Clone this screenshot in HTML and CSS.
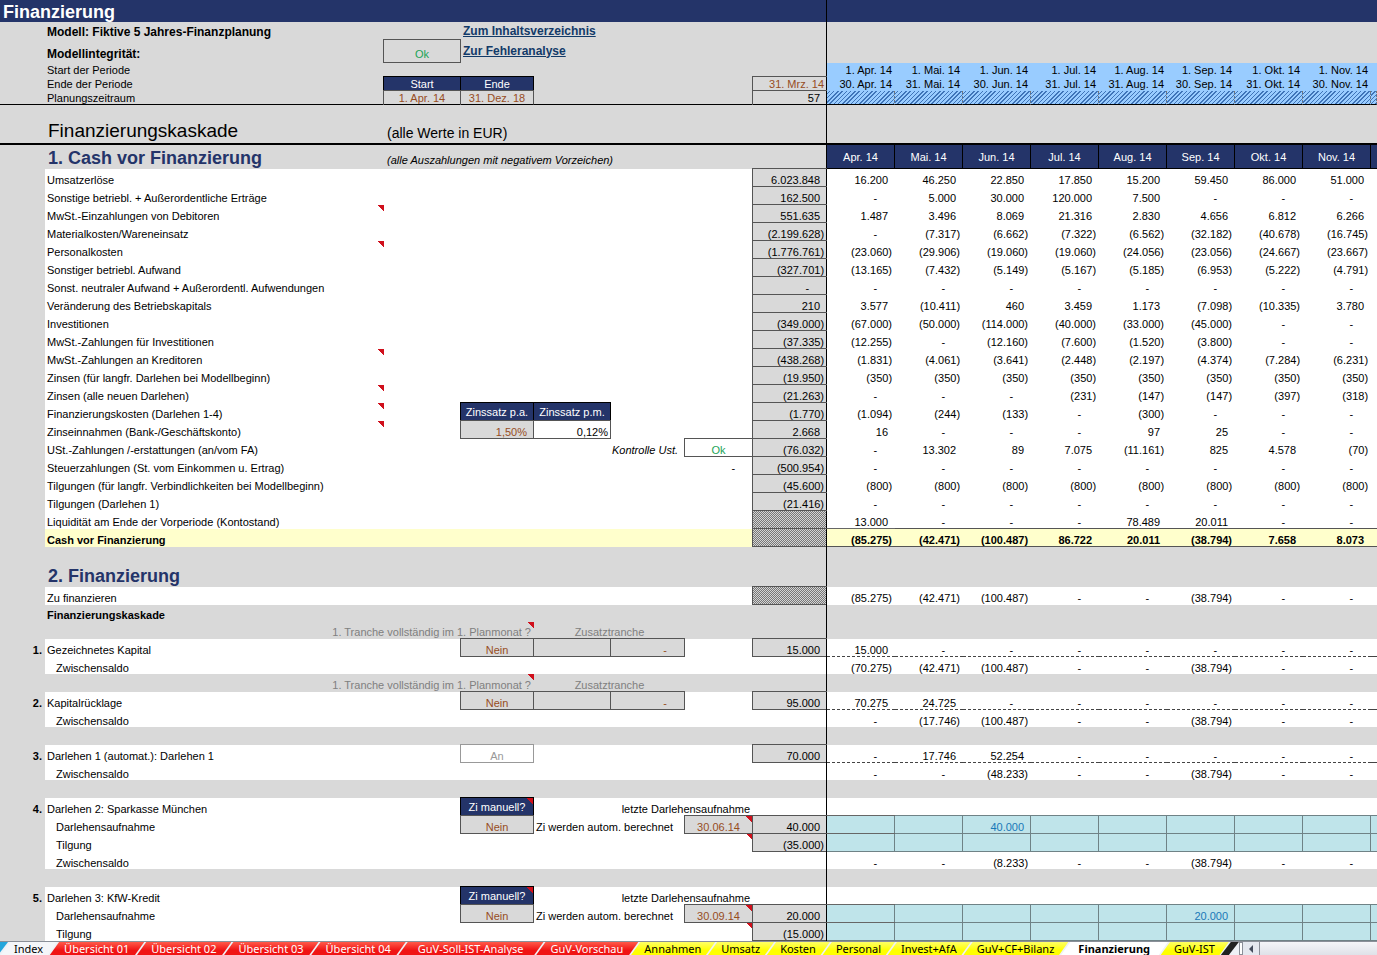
FILE: index.html
```html
<!DOCTYPE html>
<html lang="de">
<head>
  <meta charset="UTF-8" />
  <meta name="viewport" content="width=device-width, initial-scale=1" />
  <title>Finanzierung</title>
  <link rel="stylesheet" href="styles.css">
</head>
<body>
  <main class="sheet">
    <table>
      <colgroup>
        <col class="c-nr"><col class="c-label"><col class="c-77"><col class="c-73"><col class="c-77"><col class="c-74"><col class="c-68"><col class="c-74">
        <col class="c-68" span="8"><col>
      </colgroup>

      <!-- Kopf -->
      <tbody class="kopf">
        <tr class="titel"><td colspan="7"><h1>Finanzierung</h1></td><td class="t"></td><td colspan="9"></td></tr>
        <tr class="modell"><td></td><th colspan="2">Modell: Fiktive 5 Jahres-Finanzplanung</th><td colspan="4"><a href="#inhalt">Zum Inhaltsverzeichnis</a></td><td class="t"></td><td colspan="9"></td></tr>
        <tr class="integritaet"><td></td><th>Modellintegrität:</th><td class="box mid ok">Ok</td><td class="link" colspan="4"><a href="#fehler">Zur Fehleranalyse</a></td><td class="t"></td><td colspan="9"></td></tr>
        <tr class="periode"><td></td><th>Start der Periode</th><td colspan="5"></td><td class="t"></td><td>1. Apr. 14</td><td>1. Mai. 14</td><td>1. Jun. 14</td><td>1. Jul. 14</td><td>1. Aug. 14</td><td>1. Sep. 14</td><td>1. Okt. 14</td><td>1. Nov. 14</td><td></td></tr>
        <tr class="periode"><td></td><th>Ende der Periode</th><td class="dark">Start</td><td class="dark">Ende</td><td colspan="3"></td><td class="t box inp n">31. Mrz. 14</td><td>30. Apr. 14</td><td>31. Mai. 14</td><td>30. Jun. 14</td><td>31. Jul. 14</td><td>31. Aug. 14</td><td>30. Sep. 14</td><td>31. Okt. 14</td><td>30. Nov. 14</td><td></td></tr>
        <tr class="periode zeitraum"><td></td><th>Planungszeitraum</th><td class="box mid inp">1. Apr. 14</td><td class="box mid inp">31. Dez. 18</td><td colspan="3"></td><td class="t box">57</td><td></td><td></td><td></td><td></td><td></td><td></td><td></td><td></td><td></td></tr>
        <tr class="kaskade"><td></td><th><h2>Finanzierungskaskade</h2></th><td class="hint" colspan="5">(alle Werte in EUR)</td><td class="t"></td><td colspan="9"></td></tr>
      </tbody>

      <!-- 1. Cash vor Finanzierung -->
      <tbody>
        <tr class="abschnitt monate"><td></td><th><h3>1. Cash vor Finanzierung</h3></th><td class="hint" colspan="5"><i>(alle Auszahlungen mit negativem Vorzeichen)</i></td><td class="t"></td><th scope="col">Apr. 14</th><th scope="col">Mai. 14</th><th scope="col">Jun. 14</th><th scope="col">Jul. 14</th><th scope="col">Aug. 14</th><th scope="col">Sep. 14</th><th scope="col">Okt. 14</th><th scope="col">Nov. 14</th><td></td></tr>
        <tr class="row"><td></td><th>Umsatzerlöse</th><td colspan="5"></td><td class="t box">6.023.848</td><td>16.200</td><td>46.250</td><td>22.850</td><td>17.850</td><td>15.200</td><td>59.450</td><td>86.000</td><td>51.000</td><td></td></tr>
        <tr class="row"><td></td><th>Sonstige betriebl. + Außerordentliche Erträge</th><td colspan="5"></td><td class="t box">162.500</td><td class="z">-</td><td>5.000</td><td>30.000</td><td>120.000</td><td>7.500</td><td class="z">-</td><td class="z">-</td><td class="z">-</td><td></td></tr>
        <tr class="row"><td></td><th class="note">MwSt.-Einzahlungen von Debitoren</th><td colspan="5"></td><td class="t box">551.635</td><td>1.487</td><td>3.496</td><td>8.069</td><td>21.316</td><td>2.830</td><td>4.656</td><td>6.812</td><td>6.266</td><td></td></tr>
        <tr class="row"><td></td><th>Materialkosten/Wareneinsatz</th><td colspan="5"></td><td class="t box n">(2.199.628)</td><td class="z">-</td><td class="n">(7.317)</td><td class="n">(6.662)</td><td class="n">(7.322)</td><td class="n">(6.562)</td><td class="n">(32.182)</td><td class="n">(40.678)</td><td class="n">(16.745)</td><td></td></tr>
        <tr class="row"><td></td><th class="note">Personalkosten</th><td colspan="5"></td><td class="t box n">(1.776.761)</td><td class="n">(23.060)</td><td class="n">(29.906)</td><td class="n">(19.060)</td><td class="n">(19.060)</td><td class="n">(24.056)</td><td class="n">(23.056)</td><td class="n">(24.667)</td><td class="n">(23.667)</td><td></td></tr>
        <tr class="row"><td></td><th>Sonstiger betriebl. Aufwand</th><td colspan="5"></td><td class="t box n">(327.701)</td><td class="n">(13.165)</td><td class="n">(7.432)</td><td class="n">(5.149)</td><td class="n">(5.167)</td><td class="n">(5.185)</td><td class="n">(6.953)</td><td class="n">(5.222)</td><td class="n">(4.791)</td><td></td></tr>
        <tr class="row"><td></td><th>Sonst. neutraler Aufwand + Außerordentl. Aufwendungen</th><td colspan="5"></td><td class="t box z">-</td><td class="z">-</td><td class="z">-</td><td class="z">-</td><td class="z">-</td><td class="z">-</td><td class="z">-</td><td class="z">-</td><td class="z">-</td><td></td></tr>
        <tr class="row"><td></td><th>Veränderung des Betriebskapitals</th><td colspan="5"></td><td class="t box">210</td><td>3.577</td><td class="n">(10.411)</td><td>460</td><td>3.459</td><td>1.173</td><td class="n">(7.098)</td><td class="n">(10.335)</td><td>3.780</td><td></td></tr>
        <tr class="row"><td></td><th>Investitionen</th><td colspan="5"></td><td class="t box n">(349.000)</td><td class="n">(67.000)</td><td class="n">(50.000)</td><td class="n">(114.000)</td><td class="n">(40.000)</td><td class="n">(33.000)</td><td class="n">(45.000)</td><td class="z">-</td><td class="z">-</td><td></td></tr>
        <tr class="row"><td></td><th>MwSt.-Zahlungen für Investitionen</th><td colspan="5"></td><td class="t box n">(37.335)</td><td class="n">(12.255)</td><td class="z">-</td><td class="n">(12.160)</td><td class="n">(7.600)</td><td class="n">(1.520)</td><td class="n">(3.800)</td><td class="z">-</td><td class="z">-</td><td></td></tr>
        <tr class="row"><td></td><th class="note">MwSt.-Zahlungen an Kreditoren</th><td colspan="5"></td><td class="t box n">(438.268)</td><td class="n">(1.831)</td><td class="n">(4.061)</td><td class="n">(3.641)</td><td class="n">(2.448)</td><td class="n">(2.197)</td><td class="n">(4.374)</td><td class="n">(7.284)</td><td class="n">(6.231)</td><td></td></tr>
        <tr class="row"><td></td><th>Zinsen (für langfr. Darlehen bei Modellbeginn)</th><td colspan="5"></td><td class="t box n">(19.950)</td><td class="n">(350)</td><td class="n">(350)</td><td class="n">(350)</td><td class="n">(350)</td><td class="n">(350)</td><td class="n">(350)</td><td class="n">(350)</td><td class="n">(350)</td><td></td></tr>
        <tr class="row"><td></td><th class="note">Zinsen (alle neuen Darlehen)</th><td colspan="5"></td><td class="t box n">(21.263)</td><td class="z">-</td><td class="z">-</td><td class="z">-</td><td class="n">(231)</td><td class="n">(147)</td><td class="n">(147)</td><td class="n">(397)</td><td class="n">(318)</td><td></td></tr>
        <tr class="row"><td></td><th class="note">Finanzierungskosten (Darlehen 1-4)</th><td></td><td class="dark">Zinssatz p.a.</td><td class="dark">Zinssatz p.m.</td><td colspan="2"></td><td class="t box n">(1.770)</td><td class="n">(1.094)</td><td class="n">(244)</td><td class="n">(133)</td><td class="z">-</td><td class="n">(300)</td><td class="z">-</td><td class="z">-</td><td class="z">-</td><td></td></tr>
        <tr class="row"><td></td><th class="note">Zinseinnahmen (Bank-/Geschäftskonto)</th><td></td><td class="box inp">1,50%</td><td class="box white n">0,12%</td><td colspan="2"></td><td class="t box">2.668</td><td>16</td><td class="z">-</td><td class="z">-</td><td class="z">-</td><td>97</td><td>25</td><td class="z">-</td><td class="z">-</td><td></td></tr>
        <tr class="row"><td></td><th>USt.-Zahlungen /-erstattungen (an/vom FA)</th><td colspan="4"><i>Kontrolle Ust.</i></td><td class="box white mid ok">Ok</td><td class="t box n">(76.032)</td><td class="z">-</td><td>13.302</td><td>89</td><td>7.075</td><td class="n">(11.161)</td><td>825</td><td>4.578</td><td class="n">(70)</td><td></td></tr>
        <tr class="row"><td></td><th>Steuerzahlungen (St. vom Einkommen u. Ertrag)</th><td class="z" colspan="5">-</td><td class="t box n">(500.954)</td><td class="z">-</td><td class="z">-</td><td class="z">-</td><td class="z">-</td><td class="z">-</td><td class="z">-</td><td class="z">-</td><td class="z">-</td><td></td></tr>
        <tr class="row"><td></td><th>Tilgungen (für langfr. Verbindlichkeiten bei Modellbeginn)</th><td colspan="5"></td><td class="t box n">(45.600)</td><td class="n">(800)</td><td class="n">(800)</td><td class="n">(800)</td><td class="n">(800)</td><td class="n">(800)</td><td class="n">(800)</td><td class="n">(800)</td><td class="n">(800)</td><td></td></tr>
        <tr class="row"><td></td><th>Tilgungen (Darlehen 1)</th><td colspan="5"></td><td class="t box n">(21.416)</td><td class="z">-</td><td class="z">-</td><td class="z">-</td><td class="z">-</td><td class="z">-</td><td class="z">-</td><td class="z">-</td><td class="z">-</td><td></td></tr>
        <tr class="row"><td></td><th>Liquidität am Ende der Vorperiode (Kontostand)</th><td colspan="5"></td><td class="t box raster"></td><td>13.000</td><td class="z">-</td><td class="z">-</td><td class="z">-</td><td>78.489</td><td>20.011</td><td class="z">-</td><td class="z">-</td><td></td></tr>
        <tr class="row summe"><td></td><th>Cash vor Finanzierung</th><td colspan="5"></td><td class="t box raster"></td><td class="n">(85.275)</td><td class="n">(42.471)</td><td class="n">(100.487)</td><td>86.722</td><td>20.011</td><td class="n">(38.794)</td><td>7.658</td><td>8.073</td><td></td></tr>
      </tbody>

      <!-- 2. Finanzierung -->
      <tbody>
        <tr class="kurz"><td colspan="7"></td><td class="t"></td><td colspan="9"></td></tr>
        <tr class="abschnitt zwei"><td></td><th><h3>2. Finanzierung</h3></th><td colspan="5"></td><td class="t"></td><td colspan="9"></td></tr>
        <tr class="row"><td></td><th>Zu finanzieren</th><td colspan="5"></td><td class="t box raster"></td><td class="n">(85.275)</td><td class="n">(42.471)</td><td class="n">(100.487)</td><td class="z">-</td><td class="z">-</td><td class="n">(38.794)</td><td class="z">-</td><td class="z">-</td><td></td></tr>
        <tr class="kurz"><td></td><th><b>Finanzierungskaskade</b></th><td colspan="5"></td><td class="t"></td><td colspan="9"></td></tr>
        <tr class="kurz frage"><td></td><td class="note n" colspan="3">1. Tranche vollständig im 1. Planmonat ?</td><td class="mid" colspan="2">Zusatztranche</td><td></td><td class="t"></td><td colspan="9"></td></tr>
        <tr class="row strich"><td>1.</td><th>Gezeichnetes Kapital</th><td></td><td class="box mid inp">Nein</td><td class="box"></td><td class="box inp z">-</td><td></td><td class="t box">15.000</td><td>15.000</td><td class="z">-</td><td class="z">-</td><td class="z">-</td><td class="z">-</td><td class="z">-</td><td class="z">-</td><td class="z">-</td><td></td></tr>
        <tr class="row kurz"><td></td><th class="sub">Zwischensaldo</th><td colspan="5"></td><td class="t"></td><td class="n">(70.275)</td><td class="n">(42.471)</td><td class="n">(100.487)</td><td class="z">-</td><td class="z">-</td><td class="n">(38.794)</td><td class="z">-</td><td class="z">-</td><td></td></tr>
        <tr class="frage"><td></td><td class="note n" colspan="3">1. Tranche vollständig im 1. Planmonat ?</td><td class="mid" colspan="2">Zusatztranche</td><td></td><td class="t"></td><td colspan="9"></td></tr>
        <tr class="row strich"><td>2.</td><th>Kapitalrücklage</th><td></td><td class="box mid inp">Nein</td><td class="box"></td><td class="box inp z">-</td><td></td><td class="t box">95.000</td><td>70.275</td><td>24.725</td><td class="z">-</td><td class="z">-</td><td class="z">-</td><td class="z">-</td><td class="z">-</td><td class="z">-</td><td></td></tr>
        <tr class="row kurz"><td></td><th class="sub">Zwischensaldo</th><td colspan="5"></td><td class="t"></td><td class="z">-</td><td class="n">(17.746)</td><td class="n">(100.487)</td><td class="z">-</td><td class="z">-</td><td class="n">(38.794)</td><td class="z">-</td><td class="z">-</td><td></td></tr>
        <tr><td colspan="7"></td><td class="t"></td><td colspan="9"></td></tr>
        <tr class="row strich"><td>3.</td><th>Darlehen 1 (automat.): Darlehen 1</th><td></td><td class="box white mid aus">An</td><td colspan="3"></td><td class="t box">70.000</td><td class="z">-</td><td>17.746</td><td>52.254</td><td class="z">-</td><td class="z">-</td><td class="z">-</td><td class="z">-</td><td class="z">-</td><td></td></tr>
        <tr class="row kurz"><td></td><th class="sub">Zwischensaldo</th><td colspan="5"></td><td class="t"></td><td class="z">-</td><td class="z">-</td><td class="n">(48.233)</td><td class="z">-</td><td class="z">-</td><td class="n">(38.794)</td><td class="z">-</td><td class="z">-</td><td></td></tr>
        <tr><td colspan="7"></td><td class="t"></td><td colspan="9"></td></tr>
        <tr class="row"><td>4.</td><th>Darlehen 2: Sparkasse München</th><td></td><td class="dark note">Zi manuell?</td><td class="n" colspan="3">letzte Darlehensaufnahme</td><td class="t"></td><td colspan="9"></td></tr>
        <tr class="row plan"><td></td><th class="sub">Darlehensaufnahme</th><td></td><td class="box mid inp">Nein</td><td class="left" colspan="2">Zi werden autom. berechnet</td><td class="box mid inp note">30.06.14</td><td class="t box">40.000</td><td></td><td></td><td>40.000</td><td></td><td></td><td></td><td></td><td></td><td></td></tr>
        <tr class="row plan"><td></td><th class="sub">Tilgung</th><td class="note" colspan="5"></td><td class="t box n">(35.000)</td><td></td><td></td><td></td><td></td><td></td><td></td><td></td><td></td><td></td></tr>
        <tr class="row kurz"><td></td><th class="sub">Zwischensaldo</th><td colspan="5"></td><td class="t"></td><td class="z">-</td><td class="z">-</td><td class="n">(8.233)</td><td class="z">-</td><td class="z">-</td><td class="n">(38.794)</td><td class="z">-</td><td class="z">-</td><td></td></tr>
        <tr><td colspan="7"></td><td class="t"></td><td colspan="9"></td></tr>
        <tr class="row"><td>5.</td><th>Darlehen 3: KfW-Kredit</th><td></td><td class="dark note">Zi manuell?</td><td class="n" colspan="3">letzte Darlehensaufnahme</td><td class="t"></td><td colspan="9"></td></tr>
        <tr class="row plan"><td></td><th class="sub">Darlehensaufnahme</th><td></td><td class="box mid inp">Nein</td><td class="left" colspan="2">Zi werden autom. berechnet</td><td class="box mid inp note">30.09.14</td><td class="t box">20.000</td><td></td><td></td><td></td><td></td><td></td><td>20.000</td><td></td><td></td><td></td></tr>
        <tr class="row plan"><td></td><th class="sub">Tilgung</th><td class="note" colspan="5"></td><td class="t box n">(15.000)</td><td></td><td></td><td></td><td></td><td></td><td></td><td></td><td></td><td></td></tr>
      </tbody>
    </table>
  </main>

  <footer class="tabs">
    <nav>
      <span class="rest blau"></span>
      <button class="grau">Index</button>
      <button class="rot">Übersicht 01</button>
      <button class="rot">Übersicht 02</button>
      <button class="rot">Übersicht 03</button>
      <button class="rot">Übersicht 04</button>
      <button class="rot breit">GuV-Soll-IST-Analyse</button>
      <button class="rot">GuV-Vorschau</button>
      <button class="gelb">Annahmen</button>
      <button class="gelb">Umsatz</button>
      <button class="gelb">Kosten</button>
      <button class="gelb">Personal</button>
      <button class="gelb">Invest+AfA</button>
      <button class="gelb">GuV+CF+Bilanz</button>
      <button class="aktiv">Finanzierung</button>
      <button class="gelb">GuV-IST</button>
      <span class="rest schwarz"></span>
    </nav>
    <div class="scroll">
      <span class="griff"></span>
      <button class="pfeil" aria-label="Nach links"><svg width="6" height="8" viewBox="0 0 6 8"><path d="M5 0v8L1 4z" fill="#444c5c"/></svg></button>
      <span class="bahn"></span>
    </div>
  </footer>
</body>
</html>
```
FILE: styles.css
```css
* {
  box-sizing: border-box;
}

body {
  margin: 0;
  height: 100vh;
  display: flex;
  flex-direction: column;
  background: #d9d9d9;
  color: #000;
  font-family: "Liberation Sans", Arial, sans-serif;
  font-size: 11px;
  line-height: 12px;
}

.sheet {
  flex: 1;
  min-height: 0;
  overflow: auto;
  scrollbar-width: none;
}

/* Tabelle */
table {
  width: 100%;
  min-width: 1371px;
  table-layout: fixed;
  border-collapse: separate;
  border-spacing: 0;
}

.c-nr { width: 45px; }
.c-label { width: 339px; }
.c-68 { width: 68px; }
.c-73 { width: 73px; }
.c-74 { width: 74px; }
.c-77 { width: 77px; }

td, th {
  height: 18px;
  padding: 0 7px 0 2px;
  border: 0 solid transparent;
  border-bottom-width: 1px;
  text-align: right;
  vertical-align: bottom;
  font-weight: normal;
  white-space: nowrap;
}

th, .left {
  text-align: left;
}

h1, h2, h3 {
  margin: 0;
  font-size: 18px;
  line-height: 20px;
}

.kurz td, .kurz th { height: 17px; }

.row > * { background-color: #fff; }
.row > td:first-child {
  background-color: #d9d9d9;
  padding-right: 3px;
  font-weight: bold;
}
.row.kurz > * { border-bottom-width: 0; }

.row .sub { padding-left: 11px; }

td.n { padding-right: 3px; }
td.z { padding-right: 18px; }
td.mid { text-align: center; padding: 0; }

/* Fixierungslinie links der Monate */
.t + * { box-shadow: -1px 0 #000; }

td.box {
  padding-right: 6px;
  background-color: #d9d9d9;
  border-color: #555;
  border-right-width: 1px;
  box-shadow: 0 -1px #555, -1px 0 #555, -1px -1px #555;
}
td.box.n { padding-right: 2px; }
td.box.z { padding-right: 17px; }
td.box.mid { padding-right: 0; }
td.white { background-color: #fff; }
td.inp { color: #974d1e; }
td.ok { color: #1ca457; }
td.aus {
  color: #999;
  border-color: #999;
  box-shadow: 0 -1px #999, -1px 0 #999, -1px -1px #999;
}

td.dark {
  padding: 0;
  background-color: #243469;
  color: #fff;
  border-color: #000;
  border-right-width: 1px;
  box-shadow: 0 -1px #000, -1px 0 #000, -1px -1px #000;
  text-align: center;
  vertical-align: middle;
}

td.raster {
  background: repeating-conic-gradient(#777 0 25%, #d4d4d4 0 50%) 0 0 / 2px 2px;
}

/* Kommentar-Ecke */
.note {
  background-image: linear-gradient(to bottom left, #d0101c 52%, transparent 52%);
  background-position: right top;
  background-size: 6px 6px;
  background-repeat: no-repeat;
}

/* Kopf */
.titel td {
  height: 22px;
  border-bottom: 0;
  background: #243469;
  color: #fff;
  text-align: left;
}
.titel td:first-child { padding-left: 3px; }

.modell th, .integritaet th {
  font-size: 12px;
  line-height: 14px;
  font-weight: bold;
}
.modell td {
  padding-bottom: 2px;
  text-align: left;
}
.integritaet td, .integritaet th { height: 23px; padding-bottom: 1px; }
.integritaet td.ok { padding-bottom: 2px; }
.integritaet .link { text-align: left; vertical-align: middle; }

a {
  color: #123a68;
  font-size: 12px;
  font-weight: bold;
}

.periode td, .periode th { height: 14px; }
.periode .t ~ td {
  padding-right: 3px;
  background-color: #99ccff;
}
.zeitraum td, .zeitraum th { border-bottom-color: #000; }
.periode.zeitraum .t ~ td {
  border-right: 1px dotted #777;
  background-image: repeating-linear-gradient(-45deg, #3f74b8 0 1px, #99ccff 1px 3px);
}

.kaskade td, .kaskade th {
  height: 40px;
  border-bottom: 2px solid #000;
}
.kaskade h2 {
  padding: 0 0 1px 1px;
  font-size: 19px;
  line-height: 22px;
  font-weight: normal;
}
.kaskade .hint {
  padding-bottom: 1px;
  font-size: 14px;
  line-height: 18px;
}

td.hint { text-align: left; padding-left: 3px; }

.abschnitt td, .abschnitt th { height: 24px; }
.zwei td, .zwei th { height: 23px; }
.abschnitt h3 { padding-left: 1px; color: #243469; }
.abschnitt .hint { padding-bottom: 2px; }
.monate .t ~ * {
  padding: 0;
  background: #243469;
  color: #fff;
  border-color: #000;
  border-right-width: 1px;
  text-align: center;
  vertical-align: middle;
}

.summe > * {
  background-color: #ffffcc;
  font-weight: bold;
}
.summe .t ~ td {
  border-bottom-color: #555;
  box-shadow: 0 -1px #555;
}

.frage td { color: #808080; }
.strich .t ~ td { border-bottom: 1px dashed #444; }

.plan .t ~ td {
  padding-right: 6px;
  background-color: #bfe4ea;
  border-color: #6f8286;
  border-right-width: 1px;
  box-shadow: 0 -1px #6f8286;
  color: #1878b8;
}

.row.summe .t + td, .row.plan .t + td { box-shadow: -1px 0 #000, 0 -1px #666; }
.monate .t ~ td:last-child, .plan .t ~ td:last-child { border-right-width: 0; }

/* Blattregister */
.tabs {
  height: 14px;
  display: flex;
  overflow: hidden;
  border-top: 1px solid #8a8f98;
  background: #eef1f6;
}

.tabs nav { display: flex; }

.tabs button {
  height: 14px;
  margin: 0 0 0 -8px;
  padding: 0 14px;
  border: 0;
  font: 11px/14px "Noto Sans", sans-serif;
  white-space: nowrap;
  clip-path: polygon(10px 0, 100% 0, calc(100% - 10px) 100%, 0 100%);
}

.rest {
  width: 18px;
  clip-path: polygon(10px 0, 100% 0, calc(100% - 10px) 100%, 0 100%);
}
.blau { margin-left: -10px; background: #23a6dc; }
.schwarz { margin-left: -8px; background: #222; }

.tabs .grau { background: #f4f6f9; }
.tabs .rot { padding: 0 15px; background: linear-gradient(#ff5a4a, #f01414 60%); color: #fff; }
.tabs .gelb { background: linear-gradient(#ffff66, #ffff00 60%); }
.tabs .breit { padding: 0 20px; }
.tabs .aktiv { padding: 0 18px; background: #fff; font-weight: bold; }

.scroll {
  flex: 1;
  display: flex;
}
.griff { width: 4px; border: 1px solid #8a8f98; background: #fff; }
.tabs .pfeil {
  width: 17px;
  margin: 0;
  padding: 0;
  border-right: 1px solid #8a8f98;
  background: #e4e8ef;
  clip-path: none;
  line-height: 12px;
}
.bahn { flex: 1; background: linear-gradient(#f4f5f8, #dfe2e8); }
```
